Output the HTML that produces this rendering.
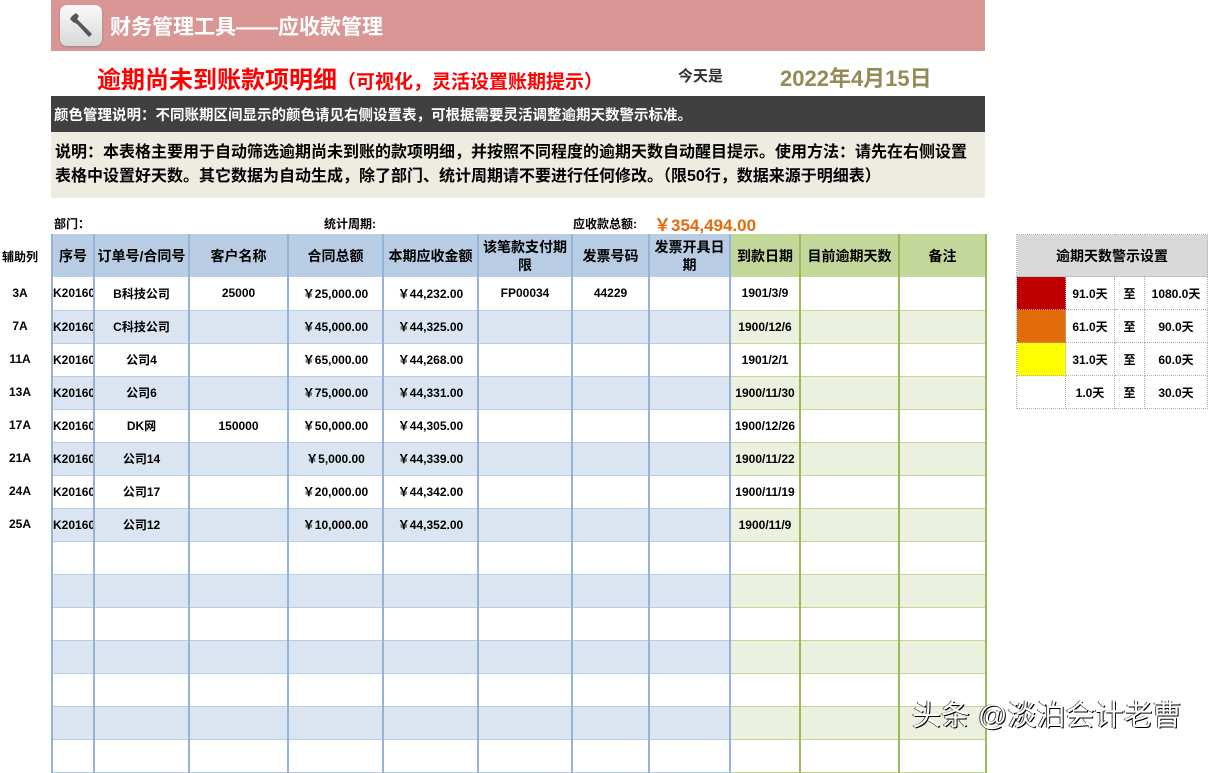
<!DOCTYPE html>
<html><head><meta charset="utf-8"><style>
*{margin:0;padding:0;box-sizing:border-box}
body{width:1219px;height:747px;overflow:hidden;background:#fff;font-family:"Liberation Sans","Noto Sans CJK SC",sans-serif;font-weight:bold;position:relative;color:#000}
.a{position:absolute}
table{border-collapse:collapse;table-layout:fixed;position:absolute}
#t{left:51px;top:234px;width:934px}
#t td{height:33px;font-size:12px;text-align:center;border-left:2px solid #95b3d7;border-right:2px solid #95b3d7;border-bottom:1px solid #b8cce4;overflow:hidden;white-space:nowrap;padding:0}
#t tr.h td{height:43px;background:#b8cce4;font-size:14px;white-space:normal;line-height:18px;border-bottom:none}
#t td.g{border-left:2px solid #9bbb59;border-right:2px solid #9bbb59;border-bottom:1px solid #c4d79b}
#t tr.h td.g{background:#c4d79b}
#t tr.s td{background:#dbe5f1}
#t tr.s td.g{background:#ebf1de}
#r{left:1016px;top:234px}
#r td{border:1px dotted #b0b0b0;height:33px;text-align:center;font-size:12px}
</style></head><body>
<div class="a" style="left:51px;top:0;width:934px;height:51px;background:#da9694"></div>
<div class="a" style="left:60px;top:5px;width:42px;height:41px;border-radius:7px;background:linear-gradient(#fafafa,#d8d8d8);box-shadow:0 1px 2px #888"></div>
<svg class="a" style="left:66px;top:10px" width="30" height="30" viewBox="0 0 30 30"><path d="M6 6 L10 3 L13 6 L11 9 L14 12 L26 24 L23 27 L11 14 L7 12 L4 9 Z" fill="#555"/></svg>
<div class="a" style="left:110px;top:11px;font-size:21px;color:#fff">财务管理工具——应收款管理</div>
<div class="a" style="left:97px;top:60px;font-size:24px;color:#f00">逾期尚未到账款项明细<span style="font-size:19px">（可视化，灵活设置账期提示）</span></div>
<div class="a" style="left:678px;top:65px;font-size:15px;color:#333">今天是</div>
<div class="a" style="left:780px;top:61px;font-size:22px;color:#948a54">2022年4月15日</div>
<div class="a" style="left:51px;top:96px;width:934px;height:36px;background:#404040;color:#fff;font-size:14.5px;padding:8px 0 0 3px;white-space:nowrap">颜色管理说明：不同账期区间显示的颜色请见右侧设置表，可根据需要灵活调整逾期天数警示标准。</div>
<div class="a" style="left:51px;top:132px;width:934px;height:66px;background:#eeece1;font-size:16px;line-height:24px;padding:9px 0 0 4px;white-space:nowrap">说明：本表格主要用于自动筛选逾期尚未到账的款项明细，并按照不同程度的逾期天数自动醒目提示。使用方法：请先在右侧设置<br>表格中设置好天数。其它数据为自动生成，除了部门、统计周期请不要进行任何修改。（限50行，数据来源于明细表）</div>
<div class="a" style="left:54px;top:215px;font-size:12px">部门：</div>
<div class="a" style="left:324px;top:215px;font-size:12px">统计周期:</div>
<div class="a" style="left:573px;top:215px;font-size:12px">应收款总额:</div>
<div class="a" style="left:654px;top:211px;font-size:17px;color:#e26b0a">￥354,494.00</div>
<div class="a" style="left:2px;top:248px;font-size:12px">辅助列</div>
<div class="a" style="left:0;top:277px;width:40px;font-size:12px;text-align:center;line-height:33px">3A<br>7A<br>11A<br>13A<br>17A<br>21A<br>24A<br>25A</div>
<table id="t">
<colgroup><col style="width:42px"><col style="width:95px"><col style="width:99px"><col style="width:95px"><col style="width:95px"><col style="width:94px"><col style="width:77px"><col style="width:81px"><col style="width:70px"><col style="width:99px"><col style="width:87px"></colgroup>
<tr class="h"><td>序号</td><td>订单号/合同号</td><td>客户名称</td><td>合同总额</td><td>本期应收金额</td><td>该笔款支付期限</td><td>发票号码</td><td>发票开具日期</td><td class="g">到款日期</td><td class="g">目前逾期天数</td><td class="g">备注</td></tr>
<tr><td>K20160</td><td>B科技公司</td><td>25000</td><td>￥25,000.00</td><td>￥44,232.00</td><td>FP00034</td><td>44229</td><td></td><td class="g">1901/3/9</td><td class="g"></td><td class="g"></td></tr>
<tr class="s"><td>K20160</td><td>C科技公司</td><td></td><td>￥45,000.00</td><td>￥44,325.00</td><td></td><td></td><td></td><td class="g">1900/12/6</td><td class="g"></td><td class="g"></td></tr>
<tr><td>K20160</td><td>公司4</td><td></td><td>￥65,000.00</td><td>￥44,268.00</td><td></td><td></td><td></td><td class="g">1901/2/1</td><td class="g"></td><td class="g"></td></tr>
<tr class="s"><td>K20160</td><td>公司6</td><td></td><td>￥75,000.00</td><td>￥44,331.00</td><td></td><td></td><td></td><td class="g">1900/11/30</td><td class="g"></td><td class="g"></td></tr>
<tr><td>K20160</td><td>DK网</td><td>150000</td><td>￥50,000.00</td><td>￥44,305.00</td><td></td><td></td><td></td><td class="g">1900/12/26</td><td class="g"></td><td class="g"></td></tr>
<tr class="s"><td>K20160</td><td>公司14</td><td></td><td>￥5,000.00</td><td>￥44,339.00</td><td></td><td></td><td></td><td class="g">1900/11/22</td><td class="g"></td><td class="g"></td></tr>
<tr><td>K20160</td><td>公司17</td><td></td><td>￥20,000.00</td><td>￥44,342.00</td><td></td><td></td><td></td><td class="g">1900/11/19</td><td class="g"></td><td class="g"></td></tr>
<tr class="s"><td>K20160</td><td>公司12</td><td></td><td>￥10,000.00</td><td>￥44,352.00</td><td></td><td></td><td></td><td class="g">1900/11/9</td><td class="g"></td><td class="g"></td></tr>
<tr><td></td><td></td><td></td><td></td><td></td><td></td><td></td><td></td><td class="g"></td><td class="g"></td><td class="g"></td></tr>
<tr class="s"><td></td><td></td><td></td><td></td><td></td><td></td><td></td><td></td><td class="g"></td><td class="g"></td><td class="g"></td></tr>
<tr><td></td><td></td><td></td><td></td><td></td><td></td><td></td><td></td><td class="g"></td><td class="g"></td><td class="g"></td></tr>
<tr class="s"><td></td><td></td><td></td><td></td><td></td><td></td><td></td><td></td><td class="g"></td><td class="g"></td><td class="g"></td></tr>
<tr><td></td><td></td><td></td><td></td><td></td><td></td><td></td><td></td><td class="g"></td><td class="g"></td><td class="g"></td></tr>
<tr class="s"><td></td><td></td><td></td><td></td><td></td><td></td><td></td><td></td><td class="g"></td><td class="g"></td><td class="g"></td></tr>
<tr><td></td><td></td><td></td><td></td><td></td><td></td><td></td><td></td><td class="g"></td><td class="g"></td><td class="g"></td></tr>
</table>
<table id="r">
<colgroup><col style="width:49px"><col style="width:49px"><col style="width:30px"><col style="width:63px"></colgroup>
<tr><td colspan="4" style="height:42px;background:#d9d9d9;font-size:14px">逾期天数警示设置</td></tr>
<tr><td style="background:#c00000"></td><td>91.0天</td><td>至</td><td>1080.0天</td></tr>
<tr><td style="background:#e26b0a"></td><td>61.0天</td><td>至</td><td>90.0天</td></tr>
<tr><td style="background:#ffff00"></td><td>31.0天</td><td>至</td><td>60.0天</td></tr>
<tr><td></td><td>1.0天</td><td>至</td><td>30.0天</td></tr>
</table>
<div class="a" style="left:912px;top:692px;font-size:29px;font-weight:normal;color:#fff;text-shadow:1px 1px 0 #000,-1px 0 0 #444;white-space:nowrap">头条 @淡泊会计老曹</div>
</body></html>
